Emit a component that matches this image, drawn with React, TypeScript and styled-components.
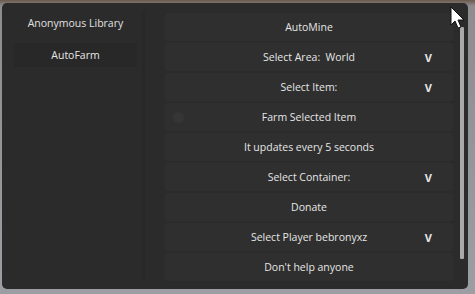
import React from 'react';
import styled, { createGlobalStyle } from 'styled-components';

const Global = createGlobalStyle`
  html, body {
    margin: 0;
    padding: 0;
    width: 475px;
    height: 294px;
    overflow: hidden;
    background: linear-gradient(180deg, #6b5a4c 0px, #8d8d90 6px, #9c9ea3 100%);
    font-family: "Open Sans", "Noto Sans", sans-serif;
  }
`;

const Window = styled.div`
  position: relative;
  box-sizing: border-box;
  margin: 3px 0 0 2px;
  width: 466px;
  height: 286px;
  border-radius: 5px;
  background: #2b2b2b;
  display: flex;
  padding: 8px 2px 8px 7px;
`;

const Sidebar = styled.div`
  width: 136px;
  display: flex;
  flex-direction: column;
  align-items: stretch;
  padding: 0 5px;
  box-sizing: border-box;
  border-right: 3px solid #282828;
`;

const LibTitle = styled.div`
  color: #e0e0e0;
  font-size: 10.5px;
  text-align: center;
  line-height: 14px;
  padding: 5px 0 13px;
`;

const Tab = styled.div`
  height: 24px;
  background: #282828;
  border-radius: 2px;
  color: #e6e6e6;
  font-size: 10.5px;
  display: flex;
  align-items: center;
  justify-content: center;
`;

const Content = styled.div`
  flex: 1;
  display: flex;
  padding: 2px 0 0 20px;
`;

const List = styled.div`
  flex: 1;
  display: flex;
  flex-direction: column;
  gap: 2px;
`;

const Row = styled.div`
  position: relative;
  height: 28px;
  background: #2f2f2f;
  border-radius: 2px;
  color: #e6e6e6;
  font-size: 10.5px;
  display: flex;
  align-items: center;
  justify-content: center;
  white-space: pre;
`;

const Arrow = styled.span`
  position: absolute;
  right: 21px;
  font-weight: 700;
  font-size: 11px;
`;

const Dot = styled.span`
  position: absolute;
  left: 8px;
  width: 11px;
  height: 11px;
  border-radius: 50%;
  background: #353535;
`;

const Track = styled.div`
  width: 13px;
  display: flex;
  justify-content: flex-end;
  padding: 14px 2px 0 0;
  box-sizing: border-box;
`;

const Thumb = styled.div`
  width: 4px;
  height: 232px;
  background: #a9a9a9;
  border-radius: 1px;
`;

const Cursor = styled.svg`
  position: absolute;
  top: 3px;
  right: 2px;
`;

const rows: { label: string; drop?: boolean; dot?: boolean }[] = [
  { label: 'AutoMine' },
  { label: 'Select Area:  World', drop: true },
  { label: 'Select Item:', drop: true },
  { label: 'Farm Selected Item', dot: true },
  { label: 'It updates every 5 seconds' },
  { label: 'Select Container:', drop: true },
  { label: 'Donate' },
  { label: 'Select Player bebronyxz', drop: true },
  { label: "Don't help anyone" },
];

export default function App() {
  return (
    <>
      <Global />
      <Window>
        <Sidebar>
          <LibTitle>Anonymous Library</LibTitle>
          <Tab>AutoFarm</Tab>
        </Sidebar>
        <Content>
          <List>
            {rows.map((r) => (
              <Row key={r.label}>
                {r.dot && <Dot />}
                {r.label}
                {r.drop && <Arrow>V</Arrow>}
              </Row>
            ))}
          </List>
          <Track>
            <Thumb />
          </Track>
        </Content>
        <Cursor width="16" height="24" viewBox="0 0 16 24">
          <path d="M1 1 L1 19 L5 15 L8 22 L11 21 L8 14 L14 14 Z" fill="#fff" stroke="#111" strokeWidth="1" />
        </Cursor>
      </Window>
    </>
  );
}
